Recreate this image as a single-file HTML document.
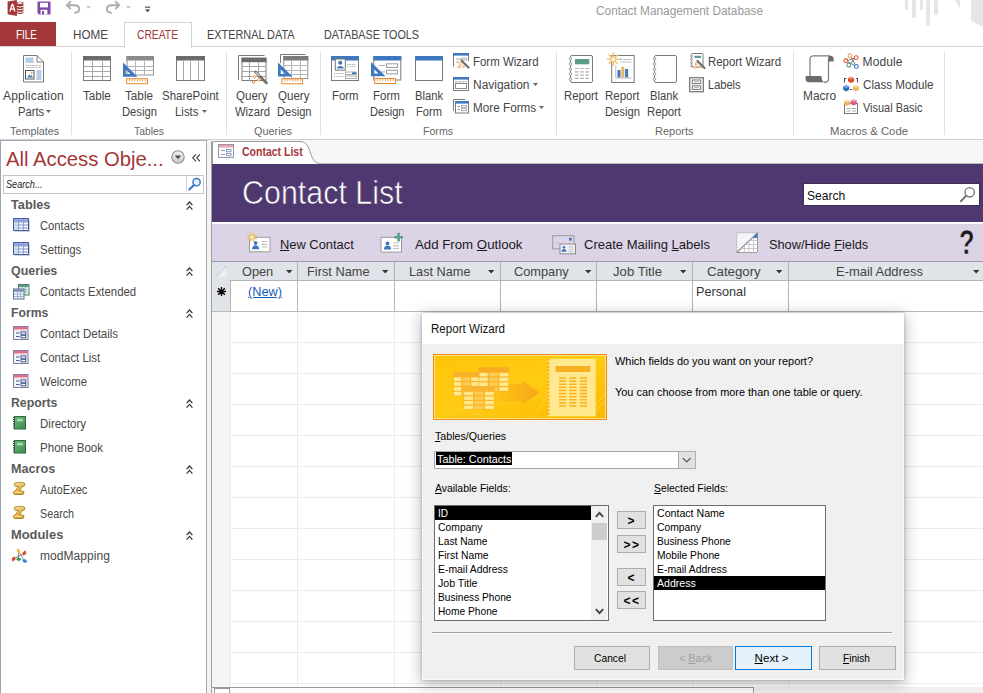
<!DOCTYPE html>
<html><head><meta charset="utf-8"><title>Access</title>
<style>
html,body{margin:0;padding:0;}
body{width:983px;height:693px;overflow:hidden;position:relative;background:#fff;font-family:"Liberation Sans",sans-serif;}
.t{position:absolute;white-space:nowrap;line-height:normal;}
u{text-decoration:underline;}
svg{position:absolute;overflow:visible;}
</style></head><body>
<div style="position:absolute;left:0px;top:0px;width:983px;height:46px;background:#fff;"></div>
<div style="position:absolute;left:905px;top:0px;width:3.3px;height:10px;background:#e6e6e6;"></div>
<div style="position:absolute;left:912px;top:0px;width:4px;height:17.6px;background:#e6e6e6;"></div>
<div style="position:absolute;left:919.5px;top:0px;width:3.6px;height:10px;background:#e6e6e6;"></div>
<div style="position:absolute;left:926px;top:0px;width:4px;height:26px;background:#e6e6e6;"></div>
<div style="position:absolute;left:934px;top:0px;width:4px;height:15px;background:#e6e6e6;"></div>
<svg style="left:0;top:0" width="983" height="46"><polygon points="954.7,0 960,0 960,8.6" fill="#e6e6e6"/><polygon points="971,0 983,0 983,27.3 971,20.5" fill="#e6e6e6"/></svg>
<span class="t" style="left:595.5px;top:3.5px;font-size:12px;color:#999;transform:scaleX(0.986);transform-origin:0 0;">Contact Management Database</span>
<div style="position:absolute;left:0px;top:22px;width:56px;height:24.5px;background:#A4373A;"></div>
<span class="t" style="left:16.0px;top:27.7px;font-size:12px;color:#fff;transform:scaleX(0.829);transform-origin:0 0;">FILE</span>
<span class="t" style="left:73.0px;top:27.7px;font-size:12px;color:#444;transform:scaleX(0.972);transform-origin:0 0;">HOME</span>
<div style="position:absolute;left:124px;top:22px;width:66px;height:25px;border:1px solid #d4d4d4;border-bottom:none;background:#fff;z-index:3;"></div>
<span class="t" style="left:137.0px;top:27.7px;font-size:12px;color:#A4373A;transform:scaleX(0.858);transform-origin:0 0;z-index:4;">CREATE</span>
<span class="t" style="left:207.0px;top:27.7px;font-size:12px;color:#444;transform:scaleX(0.907);transform-origin:0 0;">EXTERNAL DATA</span>
<span class="t" style="left:324.0px;top:27.7px;font-size:12px;color:#444;transform:scaleX(0.898);transform-origin:0 0;">DATABASE TOOLS</span>
<div style="position:absolute;left:0px;top:46px;width:983px;height:94px;background:#fff;border-top:1px solid #d4d4d4;border-bottom:1px solid #cfcfcf;box-sizing:border-box;z-index:1;"></div>
<div style="position:absolute;left:0px;top:139px;width:983px;height:554px;background:#f0f0f0;"></div>
<span class="t" style="left:3.0px;top:89.0px;font-size:12px;color:#444;letter-spacing:0.20px;z-index:5;">Application</span>
<span class="t" style="left:17.5px;top:105.0px;font-size:12px;color:#444;transform:scaleX(0.935);transform-origin:0 0;z-index:5;">Parts</span>
<svg style="left:46px;top:110px;z-index:5" width="6" height="4"><polygon points="0,0 5,0 2.5,3" fill="#666"/></svg>
<span class="t" style="left:9.5px;top:125.0px;font-size:11.5px;color:#666;transform:scaleX(0.939);transform-origin:0 0;z-index:5;">Templates</span>
<div style="position:absolute;left:71px;top:51px;width:1px;height:84px;background:#e1e1e1;z-index:5;"></div>
<span class="t" style="left:83.0px;top:89.0px;font-size:12px;color:#444;transform:scaleX(0.965);transform-origin:0 0;z-index:5;">Table</span>
<span class="t" style="left:124.5px;top:89.0px;font-size:12px;color:#444;transform:scaleX(0.976);transform-origin:0 0;z-index:5;">Table</span>
<span class="t" style="left:121.5px;top:105.0px;font-size:12px;color:#444;transform:scaleX(0.937);transform-origin:0 0;z-index:5;">Design</span>
<span class="t" style="left:162.0px;top:89.0px;font-size:12px;color:#444;transform:scaleX(0.955);transform-origin:0 0;z-index:5;">SharePoint</span>
<span class="t" style="left:175.0px;top:105.0px;font-size:12px;color:#444;transform:scaleX(0.952);transform-origin:0 0;z-index:5;">Lists</span>
<svg style="left:202px;top:110px;z-index:5" width="6" height="4"><polygon points="0,0 5,0 2.5,3" fill="#666"/></svg>
<span class="t" style="left:133.5px;top:125.0px;font-size:11.5px;color:#666;transform:scaleX(0.902);transform-origin:0 0;z-index:5;">Tables</span>
<div style="position:absolute;left:226px;top:51px;width:1px;height:84px;background:#e1e1e1;z-index:5;"></div>
<span class="t" style="left:236.0px;top:89.0px;font-size:12px;color:#444;transform:scaleX(0.964);transform-origin:0 0;z-index:5;">Query</span>
<span class="t" style="left:234.5px;top:105.0px;font-size:12px;color:#444;transform:scaleX(0.938);transform-origin:0 0;z-index:5;">Wizard</span>
<span class="t" style="left:278.0px;top:89.0px;font-size:12px;color:#444;transform:scaleX(0.964);transform-origin:0 0;z-index:5;">Query</span>
<span class="t" style="left:276.5px;top:105.0px;font-size:12px;color:#444;transform:scaleX(0.924);transform-origin:0 0;z-index:5;">Design</span>
<span class="t" style="left:253.5px;top:125.0px;font-size:11.5px;color:#666;transform:scaleX(0.944);transform-origin:0 0;z-index:5;">Queries</span>
<div style="position:absolute;left:319.5px;top:51px;width:1px;height:84px;background:#e1e1e1;z-index:5;"></div>
<span class="t" style="left:331.5px;top:89.0px;font-size:12px;color:#444;transform:scaleX(0.947);transform-origin:0 0;z-index:5;">Form</span>
<span class="t" style="left:373.0px;top:89.0px;font-size:12px;color:#444;transform:scaleX(0.964);transform-origin:0 0;z-index:5;">Form</span>
<span class="t" style="left:369.5px;top:105.0px;font-size:12px;color:#444;transform:scaleX(0.924);transform-origin:0 0;z-index:5;">Design</span>
<span class="t" style="left:414.5px;top:89.0px;font-size:12px;color:#444;transform:scaleX(0.932);transform-origin:0 0;z-index:5;">Blank</span>
<span class="t" style="left:416.0px;top:105.0px;font-size:12px;color:#444;transform:scaleX(0.929);transform-origin:0 0;z-index:5;">Form</span>
<span class="t" style="left:472.5px;top:55.0px;font-size:12px;color:#444;transform:scaleX(0.954);transform-origin:0 0;z-index:5;">Form Wizard</span>
<span class="t" style="left:472.5px;top:78.0px;font-size:12px;color:#444;transform:scaleX(0.996);transform-origin:0 0;z-index:5;">Navigation</span>
<svg style="left:533px;top:83px;z-index:5" width="6" height="4"><polygon points="0,0 5,0 2.5,3" fill="#666"/></svg>
<span class="t" style="left:472.5px;top:101.0px;font-size:12px;color:#444;transform:scaleX(0.977);transform-origin:0 0;z-index:5;">More Forms</span>
<svg style="left:539px;top:106px;z-index:5" width="6" height="4"><polygon points="0,0 5,0 2.5,3" fill="#666"/></svg>
<span class="t" style="left:422.5px;top:125.0px;font-size:11.5px;color:#666;transform:scaleX(0.921);transform-origin:0 0;z-index:5;">Forms</span>
<div style="position:absolute;left:555.5px;top:51px;width:1px;height:84px;background:#e1e1e1;z-index:5;"></div>
<span class="t" style="left:563.5px;top:89.0px;font-size:12px;color:#444;transform:scaleX(0.944);transform-origin:0 0;z-index:5;">Report</span>
<span class="t" style="left:605.0px;top:89.0px;font-size:12px;color:#444;transform:scaleX(0.958);transform-origin:0 0;z-index:5;">Report</span>
<span class="t" style="left:605.0px;top:105.0px;font-size:12px;color:#444;transform:scaleX(0.937);transform-origin:0 0;z-index:5;">Design</span>
<span class="t" style="left:650.0px;top:89.0px;font-size:12px;color:#444;transform:scaleX(0.932);transform-origin:0 0;z-index:5;">Blank</span>
<span class="t" style="left:647.0px;top:105.0px;font-size:12px;color:#444;transform:scaleX(0.944);transform-origin:0 0;z-index:5;">Report</span>
<span class="t" style="left:708.0px;top:55.0px;font-size:12px;color:#444;transform:scaleX(0.952);transform-origin:0 0;z-index:5;">Report Wizard</span>
<span class="t" style="left:708.0px;top:78.0px;font-size:12px;color:#444;transform:scaleX(0.919);transform-origin:0 0;z-index:5;">Labels</span>
<span class="t" style="left:654.5px;top:125.0px;font-size:11.5px;color:#666;transform:scaleX(0.956);transform-origin:0 0;z-index:5;">Reports</span>
<div style="position:absolute;left:793px;top:51px;width:1px;height:84px;background:#e1e1e1;z-index:5;"></div>
<span class="t" style="left:802.5px;top:89.0px;font-size:12px;color:#444;transform:scaleX(0.990);transform-origin:0 0;z-index:5;">Macro</span>
<span class="t" style="left:862.5px;top:55.0px;font-size:12px;color:#444;letter-spacing:0.13px;z-index:5;">Module</span>
<span class="t" style="left:862.5px;top:78.0px;font-size:12px;color:#444;transform:scaleX(0.970);transform-origin:0 0;z-index:5;">Class Module</span>
<span class="t" style="left:862.5px;top:101.0px;font-size:12px;color:#444;transform:scaleX(0.913);transform-origin:0 0;z-index:5;">Visual Basic</span>
<span class="t" style="left:829.5px;top:125.0px;font-size:11.5px;color:#666;transform:scaleX(0.984);transform-origin:0 0;z-index:5;">Macros &amp; Code</span>
<div style="position:absolute;left:944px;top:51px;width:1px;height:84px;background:#e1e1e1;z-index:5;"></div>
<div style="position:absolute;left:0px;top:140px;width:207px;height:553px;background:#fff;border:1px solid #a3abb8;border-bottom:none;box-sizing:border-box;"></div>
<div style="position:absolute;left:0px;top:140px;width:1.4px;height:553px;background:#9aa5b4;"></div>
<div style="position:absolute;left:207px;top:141px;width:4px;height:552px;background:#f3f3f3;"></div>
<div style="position:absolute;left:211px;top:141px;width:1px;height:552px;background:#9e9e9e;"></div>
<span class="t" style="left:6.0px;top:146.5px;font-size:21px;color:#A4373A;transform:scaleX(0.964);transform-origin:0 0;">All Access Obje...</span>
<svg style="left:170.5px;top:150px" width="14" height="14" viewBox="0 0 14 14"><defs><linearGradient id="cg" x1="0" y1="0" x2="0" y2="1"><stop offset="0" stop-color="#f4f4f4"/><stop offset="1" stop-color="#c9c9c9"/></linearGradient></defs><circle cx="7" cy="7" r="6.2" fill="url(#cg)" stroke="#8e8e8e" stroke-width="1.1"/><polygon points="3.8,5.6 10.2,5.6 7,9.2" fill="#4a4a4a"/></svg>
<svg style="left:192px;top:153.5px" width="9" height="8" viewBox="0 0 9 8"><path d="M4,0.3 L0.8,3.8 L4,7.3 M8,0.3 L4.8,3.8 L8,7.3" fill="none" stroke="#444" stroke-width="1.2"/></svg>
<div style="position:absolute;left:3px;top:175px;width:201px;height:18.6px;background:#fff;border:1px solid #c6c6c6;box-sizing:border-box;"></div>
<div style="position:absolute;left:186px;top:176px;width:1px;height:17px;background:#d6d6d6;"></div>
<span class="t" style="left:5.5px;top:178.0px;font-size:11.5px;color:#222;transform:scaleX(0.793);transform-origin:0 0;font-style:italic;">Search...</span>
<svg style="left:188px;top:177px" width="14" height="14" viewBox="0 0 14 14"><circle cx="8.6" cy="5.2" r="3.6" fill="#eaf2fb" stroke="#3b78c2" stroke-width="1.5"/><path d="M6,8 L1.3,12.6" stroke="#3b78c2" stroke-width="2.1" stroke-linecap="round"/></svg>
<span class="t" style="left:10.7px;top:197.0px;font-size:13px;color:#5a5a5a;transform:scaleX(0.977);transform-origin:0 0;font-weight:bold;">Tables</span>
<svg style="left:186px;top:200.5px" width="8" height="10" viewBox="0 0 8 10"><path d="M0.6,4.2 L3.5,1 L6.4,4.2 M0.6,8.6 L3.5,5.4 L6.4,8.6" fill="none" stroke="#333" stroke-width="1.2"/></svg>
<span class="t" style="left:39.9px;top:219.0px;font-size:12px;color:#484848;transform:scaleX(0.936);transform-origin:0 0;">Contacts</span>
<svg style="left:13px;top:218px" width="17" height="14" viewBox="0 0 17 14"><defs><linearGradient id="th" x1="0" y1="0" x2="0" y2="1"><stop offset="0" stop-color="#a9bde6"/><stop offset="1" stop-color="#6f8ccc"/></linearGradient></defs><rect x="0.5" y="0.5" width="15" height="12" fill="#f2f5fc" stroke="#44609c"/><rect x="1" y="1" width="14" height="2.6" fill="url(#th)"/><path d="M1,4 H15 M1,7 H15 M1,10 H15" stroke="#8196cc" stroke-width="1"/><path d="M5.5,1 V12 M10.5,1 V12" stroke="#8b9fd2" stroke-width="1"/><rect x="1" y="4.5" width="4" height="2" fill="#d5def2"/><rect x="1" y="7.5" width="4" height="2" fill="#d5def2"/><rect x="1" y="10.5" width="4" height="1.5" fill="#d5def2"/><path d="M1.5,13.5 H16.5 V2" stroke="#99a" stroke-width="1" fill="none" opacity="0.45"/></svg>
<span class="t" style="left:39.9px;top:243.0px;font-size:12px;color:#484848;transform:scaleX(0.953);transform-origin:0 0;">Settings</span>
<svg style="left:13px;top:242px" width="17" height="14" viewBox="0 0 17 14"><defs><linearGradient id="th" x1="0" y1="0" x2="0" y2="1"><stop offset="0" stop-color="#a9bde6"/><stop offset="1" stop-color="#6f8ccc"/></linearGradient></defs><rect x="0.5" y="0.5" width="15" height="12" fill="#f2f5fc" stroke="#44609c"/><rect x="1" y="1" width="14" height="2.6" fill="url(#th)"/><path d="M1,4 H15 M1,7 H15 M1,10 H15" stroke="#8196cc" stroke-width="1"/><path d="M5.5,1 V12 M10.5,1 V12" stroke="#8b9fd2" stroke-width="1"/><rect x="1" y="4.5" width="4" height="2" fill="#d5def2"/><rect x="1" y="7.5" width="4" height="2" fill="#d5def2"/><rect x="1" y="10.5" width="4" height="1.5" fill="#d5def2"/><path d="M1.5,13.5 H16.5 V2" stroke="#99a" stroke-width="1" fill="none" opacity="0.45"/></svg>
<span class="t" style="left:10.7px;top:263.0px;font-size:13px;color:#5a5a5a;transform:scaleX(0.956);transform-origin:0 0;font-weight:bold;">Queries</span>
<svg style="left:186px;top:266.5px" width="8" height="10" viewBox="0 0 8 10"><path d="M0.6,4.2 L3.5,1 L6.4,4.2 M0.6,8.6 L3.5,5.4 L6.4,8.6" fill="none" stroke="#333" stroke-width="1.2"/></svg>
<span class="t" style="left:39.9px;top:285.0px;font-size:12px;color:#484848;transform:scaleX(0.948);transform-origin:0 0;">Contacts Extended</span>
<svg style="left:13px;top:284px" width="17" height="16" viewBox="0 0 17 16"><rect x="5.5" y="0.5" width="10.5" height="10.5" fill="#f4f8f6" stroke="#4c7a6c"/><rect x="6" y="1" width="9.5" height="2.2" fill="#5d9c86"/><path d="M6,5.5 H15.5 M6,8 H15.5 M9.5,3 V10.5 M12.5,3 V10.5" stroke="#9fc0b4" stroke-width="1"/><rect x="0.5" y="5" width="10.5" height="10" fill="#f4f6fb" stroke="#5a6c90"/><rect x="1" y="5.5" width="9.5" height="2.2" fill="#7088b8"/><path d="M1,10 H10.5 M1,12.5 H10.5 M4.5,7.5 V14.5 M7.5,7.5 V14.5" stroke="#a3b1d4" stroke-width="1"/></svg>
<span class="t" style="left:10.7px;top:305.0px;font-size:13px;color:#5a5a5a;transform:scaleX(0.939);transform-origin:0 0;font-weight:bold;">Forms</span>
<svg style="left:186px;top:308.5px" width="8" height="10" viewBox="0 0 8 10"><path d="M0.6,4.2 L3.5,1 L6.4,4.2 M0.6,8.6 L3.5,5.4 L6.4,8.6" fill="none" stroke="#333" stroke-width="1.2"/></svg>
<span class="t" style="left:39.9px;top:327.0px;font-size:12px;color:#484848;transform:scaleX(0.960);transform-origin:0 0;">Contact Details</span>
<svg style="left:13px;top:326px" width="17" height="15" viewBox="0 0 17 15"><rect x="0.5" y="0.5" width="14.5" height="13" fill="#f3f1fa" stroke="#7e7aa0"/><rect x="1" y="1" width="13.5" height="2.5" fill="#e0708c"/><rect x="1" y="3.5" width="13.5" height="0.8" fill="#f3b9c6"/><path d="M3,7 H6.5 M3,10.5 H6.5" stroke="#4a5c90" stroke-width="1.2"/><rect x="8" y="5.8" width="4.8" height="2.4" fill="#fff" stroke="#4a5c90" stroke-width="1"/><rect x="8" y="9.4" width="4.8" height="2.4" fill="#fff" stroke="#4a5c90" stroke-width="1"/></svg>
<span class="t" style="left:39.9px;top:351.0px;font-size:12px;color:#484848;transform:scaleX(0.949);transform-origin:0 0;">Contact List</span>
<svg style="left:13px;top:350px" width="17" height="15" viewBox="0 0 17 15"><rect x="0.5" y="0.5" width="14.5" height="13" fill="#f3f1fa" stroke="#7e7aa0"/><rect x="1" y="1" width="13.5" height="2.5" fill="#e0708c"/><rect x="1" y="3.5" width="13.5" height="0.8" fill="#f3b9c6"/><path d="M3,7 H6.5 M3,10.5 H6.5" stroke="#4a5c90" stroke-width="1.2"/><rect x="8" y="5.8" width="4.8" height="2.4" fill="#fff" stroke="#4a5c90" stroke-width="1"/><rect x="8" y="9.4" width="4.8" height="2.4" fill="#fff" stroke="#4a5c90" stroke-width="1"/></svg>
<span class="t" style="left:39.9px;top:375.0px;font-size:12px;color:#484848;transform:scaleX(0.946);transform-origin:0 0;">Welcome</span>
<svg style="left:13px;top:374px" width="17" height="15" viewBox="0 0 17 15"><rect x="0.5" y="0.5" width="14.5" height="13" fill="#f3f1fa" stroke="#7e7aa0"/><rect x="1" y="1" width="13.5" height="2.5" fill="#e0708c"/><rect x="1" y="3.5" width="13.5" height="0.8" fill="#f3b9c6"/><path d="M3,7 H6.5 M3,10.5 H6.5" stroke="#4a5c90" stroke-width="1.2"/><rect x="8" y="5.8" width="4.8" height="2.4" fill="#fff" stroke="#4a5c90" stroke-width="1"/><rect x="8" y="9.4" width="4.8" height="2.4" fill="#fff" stroke="#4a5c90" stroke-width="1"/></svg>
<span class="t" style="left:10.7px;top:395.0px;font-size:13px;color:#5a5a5a;transform:scaleX(0.943);transform-origin:0 0;font-weight:bold;">Reports</span>
<svg style="left:186px;top:398.5px" width="8" height="10" viewBox="0 0 8 10"><path d="M0.6,4.2 L3.5,1 L6.4,4.2 M0.6,8.6 L3.5,5.4 L6.4,8.6" fill="none" stroke="#333" stroke-width="1.2"/></svg>
<span class="t" style="left:39.9px;top:417.0px;font-size:12px;color:#484848;transform:scaleX(0.960);transform-origin:0 0;">Directory</span>
<svg style="left:13px;top:416px" width="15" height="14" viewBox="0 0 15 14"><defs><linearGradient id="rg" x1="0" y1="0" x2="1" y2="1"><stop offset="0" stop-color="#6fb87a"/><stop offset="1" stop-color="#3f8a4c"/></linearGradient></defs><rect x="1.5" y="0.5" width="11" height="12.5" fill="url(#rg)" stroke="#2f6b3c"/><rect x="4" y="2.8" width="6" height="2.6" fill="#a6dcae"/><path d="M0.8,1 V13" stroke="#333" stroke-width="1.4" stroke-dasharray="1.1,1"/></svg>
<span class="t" style="left:39.9px;top:441.0px;font-size:12px;color:#484848;transform:scaleX(0.965);transform-origin:0 0;">Phone Book</span>
<svg style="left:13px;top:440px" width="15" height="14" viewBox="0 0 15 14"><defs><linearGradient id="rg" x1="0" y1="0" x2="1" y2="1"><stop offset="0" stop-color="#6fb87a"/><stop offset="1" stop-color="#3f8a4c"/></linearGradient></defs><rect x="1.5" y="0.5" width="11" height="12.5" fill="url(#rg)" stroke="#2f6b3c"/><rect x="4" y="2.8" width="6" height="2.6" fill="#a6dcae"/><path d="M0.8,1 V13" stroke="#333" stroke-width="1.4" stroke-dasharray="1.1,1"/></svg>
<span class="t" style="left:10.7px;top:461.0px;font-size:13px;color:#5a5a5a;transform:scaleX(0.973);transform-origin:0 0;font-weight:bold;">Macros</span>
<svg style="left:186px;top:464.5px" width="8" height="10" viewBox="0 0 8 10"><path d="M0.6,4.2 L3.5,1 L6.4,4.2 M0.6,8.6 L3.5,5.4 L6.4,8.6" fill="none" stroke="#333" stroke-width="1.2"/></svg>
<span class="t" style="left:39.9px;top:483.0px;font-size:12px;color:#484848;transform:scaleX(0.923);transform-origin:0 0;">AutoExec</span>
<svg style="left:13px;top:482px" width="14" height="14" viewBox="0 0 14 14"><defs><linearGradient id="mg" x1="0" y1="0" x2="1" y2="1"><stop offset="0" stop-color="#f9dc8c"/><stop offset="0.5" stop-color="#ecb548"/><stop offset="1" stop-color="#d39a28"/></linearGradient></defs><path d="M2.6,0.7 H10.6 C12.3,0.7 12.3,4.3 10.6,4.3 H9.6 L6.3,8.9 H9.6 C11.3,8.9 11.3,12.5 9.6,12.5 H1.8 C0.1,12.5 0.1,8.9 1.8,8.9 H2.3 L5.6,4.3 H2.6 C0.9,4.3 0.9,0.7 2.6,0.7 Z" fill="url(#mg)" stroke="#a8781c" stroke-width="0.9"/><path d="M3,2 H10 M2.2,10.2 H9" stroke="#fdeebc" stroke-width="0.9"/></svg>
<span class="t" style="left:39.9px;top:507.0px;font-size:12px;color:#484848;transform:scaleX(0.897);transform-origin:0 0;">Search</span>
<svg style="left:13px;top:506px" width="14" height="14" viewBox="0 0 14 14"><defs><linearGradient id="mg" x1="0" y1="0" x2="1" y2="1"><stop offset="0" stop-color="#f9dc8c"/><stop offset="0.5" stop-color="#ecb548"/><stop offset="1" stop-color="#d39a28"/></linearGradient></defs><path d="M2.6,0.7 H10.6 C12.3,0.7 12.3,4.3 10.6,4.3 H9.6 L6.3,8.9 H9.6 C11.3,8.9 11.3,12.5 9.6,12.5 H1.8 C0.1,12.5 0.1,8.9 1.8,8.9 H2.3 L5.6,4.3 H2.6 C0.9,4.3 0.9,0.7 2.6,0.7 Z" fill="url(#mg)" stroke="#a8781c" stroke-width="0.9"/><path d="M3,2 H10 M2.2,10.2 H9" stroke="#fdeebc" stroke-width="0.9"/></svg>
<span class="t" style="left:10.7px;top:527.0px;font-size:13px;color:#5a5a5a;transform:scaleX(0.992);transform-origin:0 0;font-weight:bold;">Modules</span>
<svg style="left:186px;top:530.5px" width="8" height="10" viewBox="0 0 8 10"><path d="M0.6,4.2 L3.5,1 L6.4,4.2 M0.6,8.6 L3.5,5.4 L6.4,8.6" fill="none" stroke="#333" stroke-width="1.2"/></svg>
<span class="t" style="left:39.9px;top:549.0px;font-size:12px;color:#484848;letter-spacing:0.08px;">modMapping</span>
<svg style="left:10.5px;top:548px" width="18" height="16" viewBox="0 0 18 16"><path d="M7.5,3.5 L13.5,12.5 M13.5,5 L2.5,11 M7.5,3.5 L7.5,11.5" stroke="#8a8a8a" stroke-width="1.1"/><path d="M7.5,3.5 L13.5,12.5" stroke="#ddd" stroke-width="0.5"/><polygon points="5.5,3 7.5,0.1 9.5,3 7.5,5.9" fill="#ecc64a" transform="rotate(-25 7.5 3)"/><polygon points="11.5,5 13.5,2.1 15.5,5 13.5,7.9" fill="#e0442c" transform="rotate(25 13.5 5)"/><polygon points="0.6,11 2.6,8.1 4.6,11 2.6,13.9" fill="#e0442c" transform="rotate(25 2.6 11)"/><polygon points="4.8,11.2 7.7,9.2 10.6,11.2 7.7,13.2" fill="#3a9a4a" transform="rotate(0 7.7 11.2)"/><polygon points="10.8,13 13.7,11 16.6,13 13.7,15" fill="#3a7ad0" transform="rotate(25 13.7 13)"/></svg>
<div style="position:absolute;left:212px;top:140px;width:771px;height:23px;background:#f6f6f6;"></div>
<svg style="left:212px;top:140px" width="120" height="24" viewBox="0 0 120 24"><path d="M0.5,24 V3 Q0.5,1.5 2,1.5 H88 C96,1.5 97,10 100,17 Q102.5,23.5 108,23.5 H120" fill="#fff" stroke="none"/><path d="M0.5,24 V3 Q0.5,1.5 2,1.5 H88 C96,1.5 97,10 100,17 Q102.5,23.5 108,23.5" fill="none" stroke="#9a9a9a" stroke-width="1"/></svg>
<div style="position:absolute;left:317px;top:163px;width:666px;height:1px;background:#b8b8b8;"></div>
<svg style="left:218px;top:144px" width="17" height="15" viewBox="0 0 17 15"><rect x="0.5" y="0.5" width="15" height="13" fill="#fff" stroke="#9a93a8"/><rect x="1" y="1" width="14" height="2.5" fill="#e8a0b0"/><path d="M3,6.5 H7 M3,10.5 H7" stroke="#8a9cc8" stroke-width="1.2"/><rect x="8.5" y="5.5" width="4.5" height="2.2" fill="#fff" stroke="#8a9cc8"/><rect x="8.5" y="9.5" width="4.5" height="2.2" fill="#fff" stroke="#8a9cc8"/></svg>
<span class="t" style="left:242.0px;top:145.0px;font-size:12px;color:#A4373A;transform:scaleX(0.875);transform-origin:0 0;font-weight:bold;">Contact List</span>
<div style="position:absolute;left:212px;top:164px;width:771px;height:58px;background:#4F386F;"></div>
<span class="t" style="left:242.0px;top:175.0px;font-size:32.5px;color:#fff;transform:scaleX(0.936);transform-origin:0 0;-webkit-text-stroke:0.6px #4F386F;">Contact List</span>
<div style="position:absolute;left:803px;top:183px;width:177px;height:23px;background:#fff;border:1px solid #3a3350;box-sizing:border-box;"></div>
<span class="t" style="left:807.4px;top:188.0px;font-size:13.5px;color:#111;transform:scaleX(0.896);transform-origin:0 0;">Search</span>
<svg style="left:959px;top:186px" width="18" height="17" viewBox="0 0 18 17"><circle cx="10.7" cy="6.3" r="4.7" fill="none" stroke="#777" stroke-width="1.4"/><path d="M7.3,9.8 L1.8,15.2" stroke="#777" stroke-width="2" stroke-linecap="round"/></svg>
<div style="position:absolute;left:212px;top:223px;width:771px;height:39px;background:#DCD3E7;"></div>
<div style="position:absolute;left:212px;top:222px;width:771px;height:1.6px;background:#fff;"></div>
<span class="t" style="left:280.0px;top:237.0px;font-size:13.5px;color:#1a1a1a;transform:scaleX(0.954);transform-origin:0 0;"><u>N</u>ew Contact</span>
<span class="t" style="left:414.5px;top:237.0px;font-size:13.5px;color:#1a1a1a;transform:scaleX(0.981);transform-origin:0 0;">Add From <u>O</u>utlook</span>
<span class="t" style="left:584.0px;top:237.0px;font-size:13.5px;color:#1a1a1a;transform:scaleX(0.965);transform-origin:0 0;">Create Mailing <u>L</u>abels</span>
<span class="t" style="left:769.0px;top:237.0px;font-size:13.5px;color:#1a1a1a;transform:scaleX(0.944);transform-origin:0 0;">Show/Hide <u>F</u>ields</span>
<span class="t" style="left:959.0px;top:221.5px;font-size:35px;color:#1a1a1a;transform:scaleX(0.725);transform-origin:0 0;font-weight:bold;-webkit-text-stroke:0.5px #DCD3E7;">?</span>
<div style="position:absolute;left:212px;top:262px;width:771px;height:431px;background:#fff;"></div>
<div style="position:absolute;left:212px;top:261px;width:771px;height:20px;background:#e0e3e7;border-top:1px solid #9d98b5;border-bottom:1px solid #b4b4b4;box-sizing:border-box;"></div>
<div style="position:absolute;left:212px;top:262px;width:18px;height:49px;background:#e0e3e7;"></div>
<div style="position:absolute;left:212px;top:311px;width:18px;height:382px;background:#f4f4f4;"></div>
<div style="position:absolute;left:230px;top:280px;width:1px;height:31px;background:#b4b4b4;"></div>
<div style="position:absolute;left:230px;top:312px;width:1px;height:375px;background:#ececec;"></div>
<div style="position:absolute;left:297px;top:262px;width:1px;height:49px;background:#b4b4b4;"></div>
<div style="position:absolute;left:297px;top:312px;width:1px;height:375px;background:#ececec;"></div>
<div style="position:absolute;left:394px;top:262px;width:1px;height:49px;background:#b4b4b4;"></div>
<div style="position:absolute;left:394px;top:312px;width:1px;height:375px;background:#ececec;"></div>
<div style="position:absolute;left:500px;top:262px;width:1px;height:49px;background:#b4b4b4;"></div>
<div style="position:absolute;left:500px;top:312px;width:1px;height:375px;background:#ececec;"></div>
<div style="position:absolute;left:596px;top:262px;width:1px;height:49px;background:#b4b4b4;"></div>
<div style="position:absolute;left:596px;top:312px;width:1px;height:375px;background:#ececec;"></div>
<div style="position:absolute;left:692px;top:262px;width:1px;height:49px;background:#b4b4b4;"></div>
<div style="position:absolute;left:692px;top:312px;width:1px;height:375px;background:#ececec;"></div>
<div style="position:absolute;left:788px;top:262px;width:1px;height:49px;background:#b4b4b4;"></div>
<div style="position:absolute;left:788px;top:312px;width:1px;height:375px;background:#ececec;"></div>
<div style="position:absolute;left:212px;top:311px;width:771px;height:1px;background:#b9b9b9;"></div>
<div style="position:absolute;left:230px;top:342px;width:753px;height:1px;background:#ececec;"></div>
<div style="position:absolute;left:230px;top:373px;width:753px;height:1px;background:#ececec;"></div>
<div style="position:absolute;left:230px;top:404px;width:753px;height:1px;background:#ececec;"></div>
<div style="position:absolute;left:230px;top:435px;width:753px;height:1px;background:#ececec;"></div>
<div style="position:absolute;left:230px;top:466px;width:753px;height:1px;background:#ececec;"></div>
<div style="position:absolute;left:230px;top:497px;width:753px;height:1px;background:#ececec;"></div>
<div style="position:absolute;left:230px;top:528px;width:753px;height:1px;background:#ececec;"></div>
<div style="position:absolute;left:230px;top:559px;width:753px;height:1px;background:#ececec;"></div>
<div style="position:absolute;left:230px;top:590px;width:753px;height:1px;background:#ececec;"></div>
<div style="position:absolute;left:230px;top:621px;width:753px;height:1px;background:#ececec;"></div>
<div style="position:absolute;left:230px;top:652px;width:753px;height:1px;background:#ececec;"></div>
<div style="position:absolute;left:230px;top:683px;width:753px;height:1px;background:#ececec;"></div>
<span class="t" style="left:241.5px;top:263.7px;font-size:13.5px;color:#444;transform:scaleX(0.945);transform-origin:0 0;">Open</span>
<svg style="left:285.5px;top:270px" width="7" height="4"><polygon points="0,0 6.4,0 3.2,3.6" fill="#333"/></svg>
<span class="t" style="left:307.0px;top:263.7px;font-size:13.5px;color:#444;transform:scaleX(0.947);transform-origin:0 0;">First Name</span>
<svg style="left:381.5px;top:270px" width="7" height="4"><polygon points="0,0 6.4,0 3.2,3.6" fill="#333"/></svg>
<span class="t" style="left:409.0px;top:263.7px;font-size:13.5px;color:#444;transform:scaleX(0.942);transform-origin:0 0;">Last Name</span>
<svg style="left:488px;top:270px" width="7" height="4"><polygon points="0,0 6.4,0 3.2,3.6" fill="#333"/></svg>
<span class="t" style="left:514.0px;top:263.7px;font-size:13.5px;color:#444;transform:scaleX(0.947);transform-origin:0 0;">Company</span>
<svg style="left:584.5px;top:270px" width="7" height="4"><polygon points="0,0 6.4,0 3.2,3.6" fill="#333"/></svg>
<span class="t" style="left:612.8px;top:263.7px;font-size:13.5px;color:#444;transform:scaleX(0.975);transform-origin:0 0;">Job Title</span>
<svg style="left:680px;top:270px" width="7" height="4"><polygon points="0,0 6.4,0 3.2,3.6" fill="#333"/></svg>
<span class="t" style="left:706.8px;top:263.7px;font-size:13.5px;color:#444;transform:scaleX(0.980);transform-origin:0 0;">Category</span>
<svg style="left:776px;top:270px" width="7" height="4"><polygon points="0,0 6.4,0 3.2,3.6" fill="#333"/></svg>
<span class="t" style="left:836.0px;top:263.7px;font-size:13.5px;color:#444;transform:scaleX(0.958);transform-origin:0 0;">E-mail Address</span>
<svg style="left:973px;top:270px" width="7" height="4"><polygon points="0,0 6.4,0 3.2,3.6" fill="#333"/></svg>
<svg style="left:215px;top:265px" width="13" height="13"><polygon points="11.5,1 11.5,12 0.5,12" fill="#eceef1"/><path d="M0.5,12 L11.5,1" stroke="#b4cbe6" stroke-width="1"/></svg>
<svg style="left:217px;top:287px" width="9" height="9" viewBox="0 0 9 9"><path d="M4.5,0 V9 M0,4.5 H9 M1.2,1.2 L7.8,7.8 M7.8,1.2 L1.2,7.8" stroke="#000" stroke-width="1.35"/></svg>
<span class="t" style="left:248.0px;top:284.0px;font-size:13.5px;color:#1560bd;transform:scaleX(0.944);transform-origin:0 0;text-decoration:underline;">(New)</span>
<span class="t" style="left:696.0px;top:284.0px;font-size:13.5px;color:#333;transform:scaleX(0.938);transform-origin:0 0;">Personal</span>
<div style="position:absolute;left:754px;top:687px;width:229px;height:6px;background:#f1f1f1;"></div>
<div style="position:absolute;left:212px;top:686.5px;width:542px;height:7px;background:#fcfcfc;border-top:1px solid #9a9a9a;border-right:1px solid #9a9a9a;box-sizing:border-box;"></div>
<div style="position:absolute;left:214px;top:688px;width:16px;height:6px;background:#fff;border:1px solid #9a9a9a;box-sizing:border-box;"></div>
<div style="position:absolute;left:422px;top:313px;width:482px;height:367px;background:#f0f0f0;border:1px solid #f8f8f8;box-sizing:border-box;box-shadow:0 3px 14px 1px rgba(0,0,0,0.27), 0 0 3px rgba(0,0,0,0.25);z-index:20;"></div>
<div style="z-index:21;position:absolute;left:422px;top:313px;width:482px;height:31px;background:#fff;"></div>
<span class="t" style="z-index:21;left:431.0px;top:321.5px;font-size:12px;color:#111;transform:scaleX(0.965);transform-origin:0 0;">Report Wizard</span>
<svg style="left:433px;top:354px;z-index:21" width="174" height="66" viewBox="0 0 174 66"><defs><linearGradient id="wg" x1="0" y1="0" x2="1" y2="1"><stop offset="0" stop-color="#ffc50a"/><stop offset="0.5" stop-color="#ffcb12"/><stop offset="1" stop-color="#fbb800"/></linearGradient><linearGradient id="ar" x1="0" y1="0" x2="1" y2="0"><stop offset="0" stop-color="#f9b21a" stop-opacity="0.3"/><stop offset="1" stop-color="#f5a61a"/></linearGradient></defs><rect x="0.5" y="0.5" width="173" height="65" fill="url(#wg)" stroke="#f08a1e"/><rect x="1.5" y="1.5" width="171" height="63" fill="none" stroke="#ffe27a" stroke-width="1"/><polygon points="62,30 88.5,30 88.5,26 106.5,38.5 88.5,51 88.5,47.3 62,47.3" fill="url(#ar)"/><path d="M22,54 L58,64 M100,64 L140,2 M150,64 L172,40 M156,64 L172,47" stroke="#ffd84a" stroke-width="1.2" opacity="0.55"/><rect x="45" y="13.4" width="31" height="24" fill="#f9b528"/><rect x="45.7" y="18.8" width="8.93333" height="3.6" fill="#ffe98f"/><rect x="45.7" y="23.6" width="8.93333" height="3.6" fill="#ffe98f"/><rect x="45.7" y="28.4" width="8.93333" height="3.6" fill="#ffe98f"/><rect x="45.7" y="33.2" width="8.93333" height="3.6" fill="#ffe98f"/><rect x="56.0333" y="18.8" width="8.93333" height="3.6" fill="#fbcb52"/><rect x="56.0333" y="23.6" width="8.93333" height="3.6" fill="#fbcb52"/><rect x="56.0333" y="28.4" width="8.93333" height="3.6" fill="#fbcb52"/><rect x="56.0333" y="33.2" width="8.93333" height="3.6" fill="#fbcb52"/><rect x="66.3667" y="18.8" width="8.93333" height="3.6" fill="#ffe98f"/><rect x="66.3667" y="23.6" width="8.93333" height="3.6" fill="#ffe98f"/><rect x="66.3667" y="28.4" width="8.93333" height="3.6" fill="#ffe98f"/><rect x="66.3667" y="33.2" width="8.93333" height="3.6" fill="#ffe98f"/><rect x="45" y="13.4" width="31" height="4.8" fill="#f7ac22"/><rect x="20.3" y="18" width="26" height="24" fill="#f9b528"/><rect x="21" y="23.4" width="7.26667" height="3.6" fill="#ffe98f"/><rect x="21" y="28.2" width="7.26667" height="3.6" fill="#ffe98f"/><rect x="21" y="33" width="7.26667" height="3.6" fill="#ffe98f"/><rect x="21" y="37.8" width="7.26667" height="3.6" fill="#ffe98f"/><rect x="29.6667" y="23.4" width="7.26667" height="3.6" fill="#fbcb52"/><rect x="29.6667" y="28.2" width="7.26667" height="3.6" fill="#fbcb52"/><rect x="29.6667" y="33" width="7.26667" height="3.6" fill="#fbcb52"/><rect x="29.6667" y="37.8" width="7.26667" height="3.6" fill="#fbcb52"/><rect x="38.3333" y="23.4" width="7.26667" height="3.6" fill="#ffe98f"/><rect x="38.3333" y="28.2" width="7.26667" height="3.6" fill="#ffe98f"/><rect x="38.3333" y="33" width="7.26667" height="3.6" fill="#ffe98f"/><rect x="38.3333" y="37.8" width="7.26667" height="3.6" fill="#ffe98f"/><rect x="20.3" y="18" width="26" height="4.8" fill="#f8b02a"/><rect x="30.5" y="32.6" width="31" height="23" fill="#f9b528"/><rect x="31.2" y="37.8" width="8.93333" height="3.4" fill="#ffe98f"/><rect x="31.2" y="42.4" width="8.93333" height="3.4" fill="#ffe98f"/><rect x="31.2" y="47" width="8.93333" height="3.4" fill="#ffe98f"/><rect x="31.2" y="51.6" width="8.93333" height="3.4" fill="#ffe98f"/><rect x="41.5333" y="37.8" width="8.93333" height="3.4" fill="#fbcb52"/><rect x="41.5333" y="42.4" width="8.93333" height="3.4" fill="#fbcb52"/><rect x="41.5333" y="47" width="8.93333" height="3.4" fill="#fbcb52"/><rect x="41.5333" y="51.6" width="8.93333" height="3.4" fill="#fbcb52"/><rect x="51.8667" y="37.8" width="8.93333" height="3.4" fill="#ffe98f"/><rect x="51.8667" y="42.4" width="8.93333" height="3.4" fill="#ffe98f"/><rect x="51.8667" y="47" width="8.93333" height="3.4" fill="#ffe98f"/><rect x="51.8667" y="51.6" width="8.93333" height="3.4" fill="#ffe98f"/><rect x="30.5" y="32.6" width="31" height="4.6" fill="#f9b432"/><rect x="115" y="4.8" width="47.7" height="57.5" fill="#ffe88e"/><path d="M115.6,4.8 V62.3" stroke="#f7ac22" stroke-width="2" stroke-dasharray="2,1.6"/><rect x="122.5" y="12" width="34.8" height="6" fill="#f8b023"/><rect x="126" y="23.3" width="7.2" height="1.5" fill="#f8b023"/><rect x="126" y="26.4" width="7.2" height="1.5" fill="#f8b023"/><rect x="126" y="29.5" width="7.2" height="1.5" fill="#f8b023"/><rect x="126" y="32.6" width="7.2" height="1.5" fill="#f8b023"/><rect x="126" y="35.7" width="7.2" height="1.5" fill="#f8b023"/><rect x="126" y="38.8" width="7.2" height="1.5" fill="#f8b023"/><rect x="126" y="41.9" width="7.2" height="1.5" fill="#f8b023"/><rect x="126" y="45" width="7.2" height="1.5" fill="#f8b023"/><rect x="126" y="48.1" width="7.2" height="1.5" fill="#f8b023"/><rect x="126" y="51.2" width="7.2" height="1.5" fill="#f8b023"/><rect x="136.2" y="23.3" width="7.2" height="1.5" fill="#f8b023"/><rect x="136.2" y="26.4" width="7.2" height="1.5" fill="#f8b023"/><rect x="136.2" y="29.5" width="7.2" height="1.5" fill="#f8b023"/><rect x="136.2" y="32.6" width="7.2" height="1.5" fill="#f8b023"/><rect x="136.2" y="35.7" width="7.2" height="1.5" fill="#f8b023"/><rect x="136.2" y="38.8" width="7.2" height="1.5" fill="#f8b023"/><rect x="136.2" y="41.9" width="7.2" height="1.5" fill="#f8b023"/><rect x="136.2" y="45" width="7.2" height="1.5" fill="#f8b023"/><rect x="136.2" y="48.1" width="7.2" height="1.5" fill="#f8b023"/><rect x="136.2" y="51.2" width="7.2" height="1.5" fill="#f8b023"/><rect x="146.8" y="23.3" width="7.2" height="1.5" fill="#f8b023"/><rect x="146.8" y="26.4" width="7.2" height="1.5" fill="#f8b023"/><rect x="146.8" y="29.5" width="7.2" height="1.5" fill="#f8b023"/><rect x="146.8" y="32.6" width="7.2" height="1.5" fill="#f8b023"/><rect x="146.8" y="35.7" width="7.2" height="1.5" fill="#f8b023"/><rect x="146.8" y="38.8" width="7.2" height="1.5" fill="#f8b023"/><rect x="146.8" y="41.9" width="7.2" height="1.5" fill="#f8b023"/><rect x="146.8" y="45" width="7.2" height="1.5" fill="#f8b023"/><rect x="146.8" y="48.1" width="7.2" height="1.5" fill="#f8b023"/><rect x="146.8" y="51.2" width="7.2" height="1.5" fill="#f8b023"/></svg>
<span class="t" style="z-index:21;left:615.0px;top:355.0px;font-size:11.5px;color:#000;transform:scaleX(0.950);transform-origin:0 0;">Which fields do you want on your report?</span>
<span class="t" style="z-index:21;left:615.0px;top:385.5px;font-size:11.5px;color:#000;transform:scaleX(0.949);transform-origin:0 0;">You can choose from more than one table or query.</span>
<span class="t" style="z-index:21;left:435.0px;top:430.0px;font-size:11.5px;color:#000;transform:scaleX(0.928);transform-origin:0 0;"><u>T</u>ables/Queries</span>
<div style="z-index:21;position:absolute;left:434px;top:450.5px;width:261.5px;height:18.5px;background:#fff;border:1px solid #a6a6a6;box-sizing:border-box;"></div>
<div style="z-index:21;position:absolute;left:435.5px;top:452px;width:76.5px;height:13.3px;background:#000;"></div>
<span class="t" style="z-index:21;left:436.5px;top:452.5px;font-size:11.5px;color:#fff;transform:scaleX(0.940);transform-origin:0 0;">Table: Contacts</span>
<div style="z-index:21;position:absolute;left:678px;top:451px;width:17.5px;height:17.5px;background:#e1e1e1;border:1px solid #adadad;box-sizing:border-box;"></div>
<svg style="z-index:21;left:682px;top:457px" width="10" height="7" viewBox="0 0 10 7"><path d="M0.8,1 L4.7,5 L8.6,1" fill="none" stroke="#5a5a5a" stroke-width="1.1"/></svg>
<span class="t" style="z-index:21;left:435.0px;top:482.0px;font-size:11.5px;color:#000;transform:scaleX(0.904);transform-origin:0 0;"><u>A</u>vailable Fields:</span>
<span class="t" style="z-index:21;left:653.5px;top:482.0px;font-size:11.5px;color:#000;transform:scaleX(0.904);transform-origin:0 0;"><u>S</u>elected Fields:</span>
<div style="z-index:21;position:absolute;left:434px;top:504.7px;width:174.5px;height:116px;background:#fff;border:1px solid #6d6d6d;box-sizing:border-box;"></div>
<div style="z-index:21;position:absolute;left:435px;top:506px;width:155.8px;height:13.5px;background:#000;"></div>
<span class="t" style="z-index:21;left:437.5px;top:507.0px;font-size:11.5px;color:#fff;transform:scaleX(0.870);transform-origin:0 0;">ID</span>
<span class="t" style="z-index:21;left:437.5px;top:521.0px;font-size:11.5px;color:#000;transform:scaleX(0.904);transform-origin:0 0;">Company</span>
<span class="t" style="z-index:21;left:437.5px;top:535.0px;font-size:11.5px;color:#000;transform:scaleX(0.890);transform-origin:0 0;">Last Name</span>
<span class="t" style="z-index:21;left:437.5px;top:549.0px;font-size:11.5px;color:#000;transform:scaleX(0.898);transform-origin:0 0;">First Name</span>
<span class="t" style="z-index:21;left:437.5px;top:563.0px;font-size:11.5px;color:#000;transform:scaleX(0.905);transform-origin:0 0;">E-mail Address</span>
<span class="t" style="z-index:21;left:437.5px;top:577.0px;font-size:11.5px;color:#000;transform:scaleX(0.922);transform-origin:0 0;">Job Title</span>
<span class="t" style="z-index:21;left:437.5px;top:591.0px;font-size:11.5px;color:#000;transform:scaleX(0.884);transform-origin:0 0;">Business Phone</span>
<span class="t" style="z-index:21;left:437.5px;top:605.0px;font-size:11.5px;color:#000;transform:scaleX(0.886);transform-origin:0 0;">Home Phone</span>
<div style="z-index:21;position:absolute;left:590.8px;top:506px;width:16.7px;height:113.5px;background:#f0f0f0;"></div>
<div style="z-index:21;position:absolute;left:592px;top:523px;width:14.6px;height:16.5px;background:#cdcdcd;"></div>
<svg style="z-index:21;left:595px;top:510.5px" width="9" height="7" viewBox="0 0 9 7"><path d="M0.8,5.8 L4.5,1.8 L8.2,5.8" fill="none" stroke="#404040" stroke-width="1.8"/></svg>
<svg style="z-index:21;left:595px;top:608px" width="9" height="7" viewBox="0 0 9 7"><path d="M0.8,1.2 L4.5,5.2 L8.2,1.2" fill="none" stroke="#404040" stroke-width="1.8"/></svg>
<div style="z-index:21;position:absolute;left:653px;top:504.7px;width:173px;height:116px;background:#fff;border:1px solid #6d6d6d;box-sizing:border-box;"></div>
<div style="z-index:21;position:absolute;left:654px;top:576.2px;width:171px;height:13.5px;background:#000;"></div>
<span class="t" style="z-index:21;left:656.7px;top:507.0px;font-size:11.5px;color:#000;transform:scaleX(0.922);transform-origin:0 0;">Contact Name</span>
<span class="t" style="z-index:21;left:656.7px;top:521.0px;font-size:11.5px;color:#000;transform:scaleX(0.900);transform-origin:0 0;">Company</span>
<span class="t" style="z-index:21;left:656.7px;top:535.0px;font-size:11.5px;color:#000;transform:scaleX(0.888);transform-origin:0 0;">Business Phone</span>
<span class="t" style="z-index:21;left:656.7px;top:549.0px;font-size:11.5px;color:#000;transform:scaleX(0.893);transform-origin:0 0;">Mobile Phone</span>
<span class="t" style="z-index:21;left:656.7px;top:563.0px;font-size:11.5px;color:#000;transform:scaleX(0.903);transform-origin:0 0;">E-mail Address</span>
<span class="t" style="z-index:21;left:656.7px;top:577.0px;font-size:11.5px;color:#fff;transform:scaleX(0.920);transform-origin:0 0;">Address</span>
<div style="z-index:21;position:absolute;left:617px;top:511.2px;width:28.5px;height:17.5px;background:#e1e1e1;border:1px solid #adadad;box-sizing:border-box;"></div>
<span class="t" style="z-index:21;left:627.5px;top:514.0px;font-size:12px;color:#000;letter-spacing:0.49px;font-weight:bold;">&gt;</span>
<div style="z-index:21;position:absolute;left:617px;top:535px;width:28.5px;height:17.5px;background:#e1e1e1;border:1px solid #adadad;box-sizing:border-box;"></div>
<span class="t" style="z-index:21;left:623.5px;top:537.8px;font-size:12px;color:#000;letter-spacing:1.48px;font-weight:bold;">&gt;&gt;</span>
<div style="z-index:21;position:absolute;left:617px;top:568.2px;width:28.5px;height:17.5px;background:#e1e1e1;border:1px solid #adadad;box-sizing:border-box;"></div>
<span class="t" style="z-index:21;left:627.5px;top:571.0px;font-size:12px;color:#000;letter-spacing:0.49px;font-weight:bold;">&lt;</span>
<div style="z-index:21;position:absolute;left:617px;top:591.2px;width:28.5px;height:17.5px;background:#e1e1e1;border:1px solid #adadad;box-sizing:border-box;"></div>
<span class="t" style="z-index:21;left:623.5px;top:594.0px;font-size:12px;color:#000;letter-spacing:1.48px;font-weight:bold;">&lt;&lt;</span>
<div style="z-index:21;position:absolute;left:432px;top:632px;width:459.5px;height:1px;background:#a0a0a0;"></div>
<div style="z-index:21;position:absolute;left:432px;top:633px;width:459.5px;height:1px;background:#fff;"></div>
<div style="z-index:21;position:absolute;left:574.2px;top:646px;width:76.3px;height:23.5px;background:#e1e1e1;border:1px solid #adadad;box-sizing:border-box;"></div>
<span class="t" style="z-index:21;left:594.2px;top:651.7px;font-size:11.5px;color:#000;transform:scaleX(0.894);transform-origin:0 0;">Cancel</span>
<div style="z-index:21;position:absolute;left:658.3px;top:646px;width:75px;height:23.5px;background:#cccccc;border:1px solid #bfbfbf;box-sizing:border-box;"></div>
<span class="t" style="z-index:21;left:678.5px;top:651.7px;font-size:11.5px;color:#a0a0a0;transform:scaleX(0.944);transform-origin:0 0;">&lt; <u>B</u>ack</span>
<div style="z-index:21;position:absolute;left:735px;top:646px;width:77px;height:23.5px;background:#e5f1fb;border:1px solid #0078d7;box-sizing:border-box;"></div>
<span class="t" style="z-index:21;left:754.5px;top:651.7px;font-size:11.5px;color:#000;letter-spacing:0.09px;"><u>N</u>ext &gt;</span>
<div style="z-index:21;position:absolute;left:819.3px;top:646px;width:76.6px;height:23.5px;background:#e1e1e1;border:1px solid #adadad;box-sizing:border-box;"></div>
<span class="t" style="z-index:21;left:842.5px;top:651.7px;font-size:11.5px;color:#000;transform:scaleX(0.880);transform-origin:0 0;"><u>F</u>inish</span>
<svg style="left:6.5px;top:0px;z-index:6" width="18" height="16" viewBox="0 0 18 16"><path d="M9.5,2.6 C11.5,1.5 14.5,1.5 16.4,2.6 V13 C14.5,14.4 11.5,14.4 9.5,13 Z" fill="#A4373A"/><ellipse cx="12.9" cy="3.1" rx="2.7" ry="0.9" fill="#fff"/><path d="M9.5,6 C11.5,7.3 14.5,7.3 16.4,6 M9.5,8.7 C11.5,10 14.5,10 16.4,8.7 M9.5,11.4 C11.5,12.7 14.5,12.7 16.4,11.4" fill="none" stroke="#fff" stroke-width="1"/><polygon points="0.6,1.6 9.9,0 9.9,16 0.6,14.3" fill="#A4373A"/><path d="M2.9,11.5 L5.1,4.4 H5.7 L7.9,11.5 M3.7,9.2 H7.1" fill="none" stroke="#fff" stroke-width="1.3"/></svg>
<svg style="left:37px;top:1px;z-index:6" width="15" height="14" viewBox="0 0 15 14"><path d="M0.5,0.5 H13.5 V13.5 H2 L0.5,12 Z" fill="#8247a6"/><rect x="3" y="1.8" width="8" height="4.6" fill="#fff"/><rect x="3.6" y="8.8" width="6.8" height="4.7" fill="#fff"/><rect x="5" y="10" width="2" height="3.5" fill="#8247a6"/></svg>
<svg style="left:60px;top:0px;z-index:6" width="30" height="16" viewBox="0 0 30 16"><path d="M10.9,1.3 L6.9,5.2 L10.9,9.1 M6.9,5.2 H14.3 C17.8,5.2 19.3,7 19.3,9.1 C19.3,11.5 17.6,12.7 14.3,12.9" fill="none" stroke="#adadad" stroke-width="1.9" stroke-linejoin="miter"/></svg>
<svg style="left:86px;top:6px;z-index:6" width="6" height="4" viewBox="0 0 6 4"><polygon points="0,0 5,0 2.5,2.8" fill="#c4c4c4"/></svg>
<svg style="left:100px;top:0px;z-index:6" width="30" height="16" viewBox="0 0 30 16"><path d="M15.2,1.3 L19.2,5.2 L15.2,9.1 M19.2,5.2 H11.8 C8.3,5.2 6.8,7 6.8,9.1 C6.8,11.5 8.5,12.7 11.8,12.9" fill="none" stroke="#adadad" stroke-width="1.9" stroke-linejoin="miter"/></svg>
<svg style="left:126px;top:6px;z-index:6" width="6" height="4" viewBox="0 0 6 4"><polygon points="0,0 5,0 2.5,2.8" fill="#c4c4c4"/></svg>
<svg style="left:145px;top:5.5px;z-index:6" width="6" height="7" viewBox="0 0 6 7"><rect x="0" y="0.6" width="5.2" height="1.1" fill="#444"/><polygon points="0,3.6 5.2,3.6 2.6,6.3" fill="#444"/></svg>
<svg style="left:23px;top:55px;z-index:6" width="22" height="28" viewBox="0 0 22 28"><path d="M0.5,0.5 H14 L20.5,7 V27 H0.5 Z" fill="#fff" stroke="#7a7a7a"/><path d="M14,0.5 V7 H20.5" fill="none" stroke="#7a7a7a"/><rect x="2.5" y="2.5" width="8" height="5.5" fill="#b5cbe8"/><path d="M2.5,10.5 H18.5 M2.5,12.5 H18.5" stroke="#c8c8c8" stroke-width="1"/><rect x="2.5" y="15.5" width="8.5" height="8.5" fill="#fff" stroke="#555" stroke-width="1"/><path d="M4,22.5 L6.3,19.5 L7.6,21 L8.6,20 L10,22.5 Z" fill="#3f78be"/><circle cx="8.8" cy="17.8" r="0.9" fill="#ee8a2c"/><rect x="13.5" y="15" width="5" height="10" fill="#b5cbe8"/></svg>
<svg style="left:83px;top:56px;z-index:6" width="28" height="25" viewBox="0 0 28 25"><rect x="0.5" y="0.5" width="27" height="24" fill="#fff" stroke="#7a7a7a" stroke-width="1"/><rect x="0" y="0" width="28" height="4.5" fill="#6b6b6b"/><rect x="9" y="4.5" width="1" height="20" fill="#a6a6a6"/><rect x="19" y="4.5" width="1" height="20" fill="#a6a6a6"/><rect x="0.5" y="10" width="27" height="1" fill="#a6a6a6"/><rect x="0.5" y="15" width="27" height="1" fill="#a6a6a6"/><rect x="0.5" y="20" width="27" height="1" fill="#a6a6a6"/></svg>
<svg style="left:123px;top:56px;z-index:6" width="32" height="28" viewBox="0 0 32 28"><rect x="4" y="0.5" width="26.5" height="18.5" fill="#fff" stroke="#8f8f8f" stroke-width="1"/><rect x="3.5" y="0" width="27.5" height="4.5" fill="#8a8a8a"/><rect x="12" y="4.5" width="1" height="14.5" fill="#b5b5b5"/><rect x="21" y="4.5" width="1" height="14.5" fill="#b5b5b5"/><rect x="4" y="10" width="26.5" height="1" fill="#b5b5b5"/><rect x="4" y="14" width="26.5" height="1" fill="#b5b5b5"/><path d="M0,6.5 V20.7 H14.5 Z M2.8,13.5 V18 H7.4 Z" fill="#3f78be" fill-rule="evenodd"/><rect x="3.7" y="22.7" width="20.8" height="5" fill="#fff" stroke="#ee8a2c" stroke-width="1"/><rect x="6.2" y="23.2" width="0.8" height="2" fill="#ee8a2c"/><rect x="8.8" y="23.2" width="0.8" height="2" fill="#ee8a2c"/><rect x="11.4" y="23.2" width="0.8" height="2" fill="#ee8a2c"/><rect x="14" y="23.2" width="0.8" height="2" fill="#ee8a2c"/><rect x="16.6" y="23.2" width="0.8" height="2" fill="#ee8a2c"/><rect x="19.2" y="23.2" width="0.8" height="2" fill="#ee8a2c"/><rect x="21.8" y="23.2" width="0.8" height="2" fill="#ee8a2c"/></svg>
<svg style="left:176px;top:56px;z-index:6" width="29" height="25" viewBox="0 0 29 25"><rect x="0.5" y="0.5" width="28" height="24" fill="#fff" stroke="#7a7a7a" stroke-width="1"/><rect x="0" y="0" width="29" height="4.5" fill="#6b6b6b"/><rect x="7" y="4.5" width="1" height="20" fill="#a6a6a6"/><rect x="14" y="4.5" width="1" height="20" fill="#a6a6a6"/><rect x="22" y="4.5" width="1" height="20" fill="#a6a6a6"/></svg>
<svg style="left:237.5px;top:54.5px;z-index:6" width="31" height="31" viewBox="0 0 31 31"><path d="M0.5,25 V0.5 H26.5" fill="none" stroke="#7a7a7a"/><rect x="4" y="3.2" width="24" height="22.3" fill="#fff" stroke="#7a7a7a" stroke-width="1"/><rect x="3.5" y="2.7" width="25" height="4.5" fill="#6b6b6b"/><rect x="11" y="7.2" width="1" height="18.3" fill="#a6a6a6"/><rect x="20" y="7.2" width="1" height="18.3" fill="#a6a6a6"/><rect x="4" y="11" width="24" height="1" fill="#a6a6a6"/><rect x="4" y="16" width="24" height="1" fill="#a6a6a6"/><rect x="4" y="21" width="24" height="1" fill="#a6a6a6"/><path d="M17.5,17 L28.5,28" stroke="#6f6f6f" stroke-width="2.6" stroke-linecap="round"/><path d="M18,17.5 L21.2,20.7" stroke="#d9d9d9" stroke-width="1.2" stroke-linecap="round"/><rect x="15.4" y="20.7" width="2.2" height="2.2" fill="#fff" stroke="#ee8a2c" stroke-width="0.9" transform="rotate(45 16.5 21.8)"/><rect x="19.5" y="23.7" width="2.2" height="2.2" fill="#fff" stroke="#ee8a2c" stroke-width="0.9" transform="rotate(45 20.6 24.8)"/><rect x="14.5" y="25.9" width="2.2" height="2.2" fill="#fff" stroke="#ee8a2c" stroke-width="0.9" transform="rotate(45 15.6 27)"/></svg>
<svg style="left:278px;top:54px;z-index:6" width="31" height="31" viewBox="0 0 31 31"><path d="M2.5,9 V0.5 H27.5" fill="none" stroke="#7a7a7a"/><rect x="5.8" y="2.5" width="24" height="22" fill="#fff" stroke="#8f8f8f" stroke-width="1"/><rect x="5.3" y="2" width="25" height="4.5" fill="#7a7a7a"/><rect x="13" y="6.5" width="1" height="18" fill="#b5b5b5"/><rect x="22" y="6.5" width="1" height="18" fill="#b5b5b5"/><rect x="5.8" y="11" width="24" height="1" fill="#b5b5b5"/><rect x="5.8" y="16" width="24" height="1" fill="#b5b5b5"/><rect x="5.8" y="20" width="24" height="1" fill="#b5b5b5"/><path d="M0,8.4 V22.6 H14.5 Z M2.8,15.4 V19.9 H7.4 Z" fill="#3f78be" fill-rule="evenodd"/><rect x="3.8" y="24.8" width="20.8" height="5" fill="#fff" stroke="#ee8a2c" stroke-width="1"/><rect x="6.3" y="25.3" width="0.8" height="2" fill="#ee8a2c"/><rect x="8.9" y="25.3" width="0.8" height="2" fill="#ee8a2c"/><rect x="11.5" y="25.3" width="0.8" height="2" fill="#ee8a2c"/><rect x="14.1" y="25.3" width="0.8" height="2" fill="#ee8a2c"/><rect x="16.7" y="25.3" width="0.8" height="2" fill="#ee8a2c"/><rect x="19.3" y="25.3" width="0.8" height="2" fill="#ee8a2c"/><rect x="21.9" y="25.3" width="0.8" height="2" fill="#ee8a2c"/></svg>
<svg style="left:331px;top:56px;z-index:6" width="28" height="25" viewBox="0 0 28 25"><rect x="0.5" y="0.5" width="27" height="24" fill="#fff" stroke="#7a7a7a"/><rect x="0" y="0" width="28" height="4.5" fill="#3f78be"/><rect x="4.3" y="3" width="10" height="11.2" fill="#fff" stroke="#777"/><circle cx="9.3" cy="6.8" r="2" fill="#3f78be"/><path d="M5.8,12.6 C5.8,9 12.8,9 12.8,12.6 Z" fill="#3f78be"/><path d="M16,8.5 H25 M16,10.5 H25" stroke="#aaa" stroke-width="1" stroke-dasharray="1,0.7"/><path d="M3,17.5 H12.5 M3,20.5 H12.5" stroke="#aaa" stroke-width="1" stroke-dasharray="1,0.7"/><rect x="14.5" y="16" width="11" height="2.4" fill="#fff" stroke="#999" stroke-width="0.8"/><rect x="21" y="16.3" width="4" height="1.8" fill="#3f78be"/><rect x="14.5" y="20" width="11" height="2.4" fill="#fff" stroke="#999" stroke-width="0.8"/></svg>
<svg style="left:371px;top:56px;z-index:6" width="31" height="28" viewBox="0 0 31 28"><rect x="2.8" y="0.5" width="27" height="23.5" fill="#fff" stroke="#7a7a7a"/><rect x="2.3" y="0" width="28" height="4.5" fill="#3f78be"/><path d="M8,9.5 H14 M8,16 H14" stroke="#aaa" stroke-width="1"/><rect x="15.5" y="7.8" width="11" height="3.6" fill="#fff" stroke="#999"/><rect x="15.5" y="14.3" width="11" height="3.6" fill="#fff" stroke="#999"/><path d="M0,6 V20.2 H14.5 Z M2.8,13 V17.5 H7.4 Z" fill="#3f78be" fill-rule="evenodd"/><rect x="3.7" y="22.5" width="20.8" height="5" fill="#fff" stroke="#ee8a2c" stroke-width="1"/><rect x="6.2" y="23" width="0.8" height="2" fill="#ee8a2c"/><rect x="8.8" y="23" width="0.8" height="2" fill="#ee8a2c"/><rect x="11.4" y="23" width="0.8" height="2" fill="#ee8a2c"/><rect x="14" y="23" width="0.8" height="2" fill="#ee8a2c"/><rect x="16.6" y="23" width="0.8" height="2" fill="#ee8a2c"/><rect x="19.2" y="23" width="0.8" height="2" fill="#ee8a2c"/><rect x="21.8" y="23" width="0.8" height="2" fill="#ee8a2c"/></svg>
<svg style="left:415px;top:56px;z-index:6" width="28" height="25" viewBox="0 0 28 25"><rect x="0.5" y="0.5" width="27" height="24" fill="#fff" stroke="#7a7a7a"/><rect x="0" y="0" width="28" height="4.5" fill="#3f78be"/></svg>
<svg style="left:453px;top:53px;z-index:6" width="17" height="16" viewBox="0 0 17 16"><path d="M0.5,13.5 V0.5 H15.5 V8" fill="#fff" stroke="#7a7a7a"/><rect x="0" y="0" width="16" height="2.6" fill="#3f78be"/><path d="M3,6 H8 M3,9 H6" stroke="#aaa"/><rect x="9" y="5" width="4.5" height="2" fill="#fff" stroke="#999" stroke-width="0.8"/><path d="M8.5,7.5 L15.5,14.5" stroke="#6f6f6f" stroke-width="2.2" stroke-linecap="round"/><rect x="6.3" y="9.6" width="1.9" height="1.9" fill="#fff" stroke="#ee8a2c" stroke-width="0.8" transform="rotate(45 7.3 10.6)"/><rect x="9.3" y="12.4" width="1.9" height="1.9" fill="#fff" stroke="#ee8a2c" stroke-width="0.8" transform="rotate(45 10.3 13.4)"/><rect x="5.2" y="13" width="1.9" height="1.9" fill="#fff" stroke="#ee8a2c" stroke-width="0.8" transform="rotate(45 6.2 14)"/></svg>
<svg style="left:453px;top:77px;z-index:6" width="17" height="15" viewBox="0 0 17 15"><rect x="0.5" y="0.5" width="15" height="13" fill="#fff" stroke="#7a7a7a"/><rect x="0" y="0" width="16" height="2.6" fill="#3f78be"/><path d="M2,4.8 H14" stroke="#999" stroke-dasharray="2.5,1"/><rect x="2.5" y="6.5" width="11" height="5" fill="#fff" stroke="#888"/></svg>
<svg style="left:453px;top:98.5px;z-index:6" width="17" height="16" viewBox="0 0 17 16"><path d="M0.5,12 V0.5 H12" fill="none" stroke="#7a7a7a"/><rect x="2.5" y="2.5" width="13" height="11.5" fill="#fff" stroke="#7a7a7a"/><rect x="2" y="2" width="14" height="2.6" fill="#3f78be"/><path d="M4.5,7.5 H7 M4.5,10.5 H7" stroke="#999"/><rect x="8.5" y="6.5" width="5" height="2" fill="#fff" stroke="#999" stroke-width="0.8"/><rect x="8.5" y="9.8" width="5" height="2" fill="#fff" stroke="#999" stroke-width="0.8"/></svg>
<svg style="left:568.5px;top:55px;z-index:6" width="25" height="28" viewBox="0 0 25 28"><rect x="1.5" y="0.5" width="22" height="27" rx="1.5" fill="#fff" stroke="#7a7a7a"/><circle cx="1.5" cy="4" r="1.3" fill="#fff" stroke="#8a8a8a" stroke-width="0.8"/><circle cx="1.5" cy="9" r="1.3" fill="#fff" stroke="#8a8a8a" stroke-width="0.8"/><circle cx="1.5" cy="14" r="1.3" fill="#fff" stroke="#8a8a8a" stroke-width="0.8"/><circle cx="1.5" cy="19" r="1.3" fill="#fff" stroke="#8a8a8a" stroke-width="0.8"/><circle cx="1.5" cy="24" r="1.3" fill="#fff" stroke="#8a8a8a" stroke-width="0.8"/><rect x="6" y="4" width="14.3" height="5.3" fill="#5b9e8a"/><path d="M6,13.5 H20.5" stroke="#b0b0b0" stroke-width="1.2" stroke-dasharray="3.6,1.6"/><path d="M6,16.8 H20.5" stroke="#b0b0b0" stroke-width="1.2" stroke-dasharray="3.6,1.6"/><path d="M6,20.1 H20.5" stroke="#b0b0b0" stroke-width="1.2" stroke-dasharray="3.6,1.6"/><path d="M6,23.4 H20.5" stroke="#b0b0b0" stroke-width="1.2" stroke-dasharray="3.6,1.6"/></svg>
<svg style="left:606.5px;top:52.5px;z-index:6" width="29" height="31" viewBox="0 0 29 31"><rect x="4.7" y="2.5" width="22.5" height="27" fill="#fff" stroke="#7a7a7a"/><g stroke="#f0c27a" stroke-width="1.6" stroke-linecap="round"><path d="M6.3,6.3 L12.3,6.3"/><path d="M6.3,6.3 L10.5426,10.5426"/><path d="M6.3,6.3 L6.3,12.3"/><path d="M6.3,6.3 L2.05736,10.5426"/><path d="M6.3,6.3 L0.3,6.3"/><path d="M6.3,6.3 L2.05736,2.05736"/><path d="M6.3,6.3 L6.3,0.3"/><path d="M6.3,6.3 L10.5426,2.05736"/></g><circle cx="6.3" cy="6.3" r="2.2" fill="#fff" stroke="#f0c27a" stroke-width="1.2"/><circle cx="14" cy="6" r="0.7" fill="#3f78be"/><path d="M16,6.5 H24.5 M13,9 H24.5" stroke="#b5b5b5" stroke-width="0.9"/><rect x="10.5" y="17" width="3" height="7.5" fill="#3f78be"/><rect x="14.3" y="13.8" width="3" height="10.7" fill="#e8b860"/><rect x="18.1" y="16" width="3" height="8.5" fill="#3f78be"/><path d="M8.8,12.5 V25 H24.5" fill="none" stroke="#b0b0b0" stroke-width="0.9"/></svg>
<svg style="left:652.5px;top:55px;z-index:6" width="25" height="28" viewBox="0 0 25 28"><rect x="1.5" y="0.5" width="22" height="27" rx="1.5" fill="#fff" stroke="#7a7a7a"/><circle cx="1.5" cy="4" r="1.3" fill="#fff" stroke="#8a8a8a" stroke-width="0.8"/><circle cx="1.5" cy="9" r="1.3" fill="#fff" stroke="#8a8a8a" stroke-width="0.8"/><circle cx="1.5" cy="14" r="1.3" fill="#fff" stroke="#8a8a8a" stroke-width="0.8"/><circle cx="1.5" cy="19" r="1.3" fill="#fff" stroke="#8a8a8a" stroke-width="0.8"/><circle cx="1.5" cy="24" r="1.3" fill="#fff" stroke="#8a8a8a" stroke-width="0.8"/></svg>
<svg style="left:689.5px;top:53px;z-index:6" width="16" height="16" viewBox="0 0 16 16"><rect x="1.5" y="0.5" width="11.5" height="13.5" rx="1" fill="#fff" stroke="#7a7a7a" stroke-dasharray="12,0"/><rect x="4.5" y="2.8" width="6.5" height="2.2" fill="#5b9e8a"/><circle cx="1.5" cy="3" r="0.9" fill="#fff" stroke="#8a8a8a" stroke-width="0.8"/><circle cx="1.5" cy="6.3" r="0.9" fill="#fff" stroke="#8a8a8a" stroke-width="0.8"/><circle cx="1.5" cy="9.6" r="0.9" fill="#fff" stroke="#8a8a8a" stroke-width="0.8"/><circle cx="1.5" cy="12.9" r="0.9" fill="#fff" stroke="#8a8a8a" stroke-width="0.8"/><path d="M7.5,8 L14.5,15" stroke="#6f6f6f" stroke-width="2.2" stroke-linecap="round"/><rect x="5.3" y="10" width="1.9" height="1.9" fill="#fff" stroke="#ee8a2c" stroke-width="0.8" transform="rotate(45 6.3 11)"/><rect x="8.3" y="12.8" width="1.9" height="1.9" fill="#fff" stroke="#ee8a2c" stroke-width="0.8" transform="rotate(45 9.3 13.8)"/><rect x="4.2" y="13.5" width="1.9" height="1.9" fill="#fff" stroke="#ee8a2c" stroke-width="0.8" transform="rotate(45 5.2 14.5)"/></svg>
<svg style="left:689px;top:76.5px;z-index:6" width="16" height="16" viewBox="0 0 16 16"><rect x="0.7" y="0.7" width="13.6" height="14" fill="#fff" stroke="#7a7a7a" stroke-width="1.3"/><rect x="3.3" y="3" width="8.4" height="3.6" fill="#fff" stroke="#777"/><rect x="3.3" y="8.8" width="8.4" height="3.6" fill="#fff" stroke="#777"/><path d="M5,4.8 H10 M5,10.6 H10" stroke="#aaa"/></svg>
<svg style="left:804.5px;top:54.5px;z-index:6" width="30" height="28" viewBox="0 0 30 28"><path d="M5,21 V4 C5,1.5 6,0.8 8.5,0.8 H25 C23.5,1.5 23.5,3 23.5,4.5 V24 C23.5,26.5 21,27.3 19,27.3" fill="#fff" stroke="#7a7a7a" stroke-width="1.2"/><path d="M23.5,6.5 H28.6 V3.8 C28.6,1.5 27,0.8 25.3,0.8 C23.8,1.5 23.5,3 23.5,4.5 Z" fill="#6b6b6b"/><path d="M0.6,21 H16.5 C16.5,23.5 17,26 19.2,27.3 H4 C1.5,27.3 0.6,25.5 0.6,23.5 Z" fill="#6b6b6b"/></svg>
<svg style="left:843px;top:53px;z-index:6" width="17" height="17" viewBox="0 0 17 17"><path d="M3.5,8 L13,4.5 M7,2.5 L13.5,13.5 M3.5,8 L13.5,13.5 M5.5,12.5 L13,4.5" stroke="#777" stroke-width="1"/><circle cx="7" cy="2.7" r="1.9" fill="#fff" stroke="#f0a060" stroke-width="1.1"/><circle cx="13.2" cy="4.6" r="1.9" fill="#fff" stroke="#e0583a" stroke-width="1.1"/><circle cx="2.8" cy="7.8" r="1.9" fill="#fff" stroke="#e0583a" stroke-width="1.1"/><circle cx="5.8" cy="12.2" r="1.9" fill="#fff" stroke="#4aa080" stroke-width="1.1"/><circle cx="13.4" cy="13.4" r="1.9" fill="#fff" stroke="#3f78be" stroke-width="1.1"/></svg>
<svg style="left:843px;top:76px;z-index:6" width="17" height="17" viewBox="0 0 17 17"><path d="M1.5,6.5 V2.5 H3.5 M13,2.5 H14.5 V6.5 M7,13.5 H9.2" fill="none" stroke="#555" stroke-width="1.1"/><path d="M5,2.2 l3,-1.5 l3,1.5 v3.3 l-3,1.6 l-3,-1.6 Z" fill="#dc4a2c"/><path d="M5,2.2 l3,-1.5 l3,1.5 l-3,1.4 Z" fill="#f08a6a"/><path d="M0.2,10.5 l3,-1.5 l3,1.5 v3.3 l-3,1.6 l-3,-1.6 Z" fill="#2f6fbd"/><path d="M0.2,10.5 l3,-1.5 l3,1.5 l-3,1.4 Z" fill="#7fb0e8"/><path d="M10,10.5 l3,-1.5 l3,1.5 v3.3 l-3,1.6 l-3,-1.6 Z" fill="#e8b860"/><path d="M10,10.5 l3,-1.5 l3,1.5 l-3,1.4 Z" fill="#f8dca0"/></svg>
<svg style="left:843px;top:99px;z-index:6" width="17" height="16" viewBox="0 0 17 16"><rect x="1.5" y="4.5" width="13" height="10" fill="#fff" stroke="#777"/><path d="M3.5,9.5 H7.5 M9,9.5 H13 M3.5,12 H7.5 M9,12 H13" stroke="#aaa"/><path d="M1,2.2 l3,-1.5 l3,1.5 v3.3 l-3,1.6 l-3,-1.6 Z" fill="#e8b860"/><path d="M1,2.2 l3,-1.5 l3,1.5 l-3,1.4 Z" fill="#f8dca0"/><path d="M7.7,1.7 l3,-1.5 l3,1.5 v3.3 l-3,1.6 l-3,-1.6 Z" fill="#d85a82"/><path d="M7.7,1.7 l3,-1.5 l3,1.5 l-3,1.4 Z" fill="#f0a0b8"/></svg>
<svg style="left:246.5px;top:231.5px;z-index:2" width="25" height="21" viewBox="0 0 25 21"><rect x="2.5" y="5.3" width="20.5" height="14.5" fill="#fff" stroke="#9a9a9a"/><circle cx="8.6" cy="11" r="1.9" fill="#3f78be"/><path d="M5,17.3 c0,-5.4 7.2,-5.4 7.2,0 Z" fill="#3f78be"/><path d="M14.5,9.5 H20.5 M14.5,12.3 H20.5 M14.5,15 H20.5" stroke="#c0c0c0" stroke-width="1.2"/><g stroke="#e8c474" stroke-width="1.5" stroke-linecap="round"><path d="M5,5.2 L9.24985,6.96034"/><path d="M5,5.2 L6.76034,9.44985"/><path d="M5,5.2 L3.23966,9.44985"/><path d="M5,5.2 L0.750154,6.96034"/><path d="M5,5.2 L0.750154,3.43966"/><path d="M5,5.2 L3.23966,0.950154"/><path d="M5,5.2 L6.76034,0.950154"/><path d="M5,5.2 L9.24985,3.43966"/></g><circle cx="5" cy="5.2" r="1.932" fill="#fdf3dc" stroke="#e8c474" stroke-width="1"/></svg>
<svg style="left:380px;top:231.5px;z-index:2" width="25" height="21" viewBox="0 0 25 21"><rect x="1" y="5.3" width="20.5" height="14.8" fill="#fff" stroke="#9a9a9a"/><circle cx="7.5" cy="11.3" r="1.9" fill="#3f78be"/><path d="M3.9,17.6 c0,-5.4 7.2,-5.4 7.2,0 Z" fill="#3f78be"/><path d="M13,11 H19 M13,13.8 H19 M13,16.5 H19" stroke="#c0c0c0" stroke-width="1.2"/><path d="M18.6,0.8 V9.6 M14.2,5.2 H23" stroke="#5b9e8a" stroke-width="2.6"/></svg>
<svg style="left:551.5px;top:234.5px;z-index:2" width="25" height="20" viewBox="0 0 25 20"><rect x="0.7" y="0.7" width="21.3" height="13.2" fill="#ddd5e8" stroke="#9a9a9a"/><rect x="17" y="2.8" width="2.8" height="2.8" fill="#3f78be"/><path d="M3,8 H8" stroke="#bbb"/><rect x="8" y="9" width="15.5" height="9.8" fill="#f4f2f7" stroke="#8a8a8a"/><circle cx="12" cy="12.3" r="1.368" fill="#3f78be"/><path d="M9.408,16.836 c0,-3.888 5.184,-3.888 5.184,0 Z" fill="#3f78be"/><path d="M16.5,12 H21.5 M16.5,14.3 H21.5 M16.5,16.5 H21.5" stroke="#c0c0c0" stroke-width="1"/></svg>
<svg style="left:736px;top:232px;z-index:2" width="23" height="22" viewBox="0 0 23 22"><rect x="0.8" y="0.8" width="20.7" height="19.7" fill="#f6f3f9"/><polygon points="21.5,0.8 21.5,20.5 0.8,20.5" fill="#fff"/><path d="M0.8,20.5 H21.5 V0.8" fill="none" stroke="#9a9a9a"/><path d="M0.8,20.5 V0.8 H21.5" fill="none" stroke="#9a9a9a" stroke-dasharray="1,1.2"/><path d="M0.8,20.5 L21.5,0.8" stroke="#8a8a8a" stroke-width="1.1"/><path d="M9.5,12.5 H21.5 M5,16.5 H21.5 M13.5,8.5 H21.5 M13,9 V20.5 M17.5,4.5 V20.5 M8.5,13.5 V20.5" stroke="#c4c4c4" stroke-width="0.9"/><polygon points="21.5,0.8 21.5,6 16.3,5.8" fill="#3f78be"/></svg>
</body></html>
